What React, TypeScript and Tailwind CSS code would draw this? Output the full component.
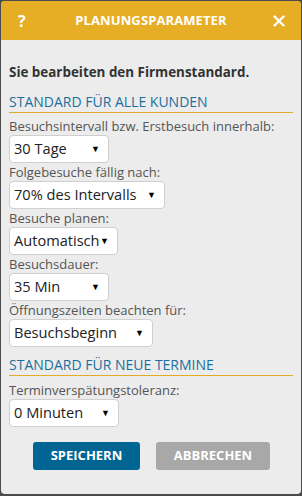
import React from 'react';

const Select: React.FC<{ value: string; width: string }> = ({ value, width }) => (
  <div
    className={`flex items-center justify-between h-[28px] ${width} bg-white border border-[#cfcfcf] rounded-[4px] pl-[4px] pr-[8px] text-[14.6px] text-[#222] whitespace-nowrap`}
  >
    <span>{value}</span>
    <span className="text-[9px] text-black">▼</span>
  </div>
);

const Field: React.FC<{ label: string; value: string; width: string }> = ({ label, value, width }) => (
  <div className="flex flex-col">
    <div className="text-[13px] leading-[18px] text-[#555]">{label}</div>
    <Select value={value} width={width} />
  </div>
);

const SectionTitle: React.FC<{ children: React.ReactNode }> = ({ children }) => (
  <div className="text-[14px] leading-[18px] text-[#1c6f9c] border-b border-[#e3ab27] pb-[1px] mr-[7px]">{children}</div>
);

export default function App() {
  return (
    <div
      className="w-[302px] h-[496px] bg-[#4b4b4b] p-[1px] pb-[2px]"
      style={{ fontFamily: '"Open Sans", "Liberation Sans", sans-serif' }}
    >
      <div className="h-full bg-[#ececec] rounded-[4px] overflow-hidden flex flex-col">
        {/* Header */}
        <div className="h-[39px] bg-[#e6ae24] flex items-center justify-between px-[16px] text-white font-bold">
          <span className="text-[16px] w-[12px] pl-[1px]">?</span>
          <span className="text-[13px] tracking-[0.1px]">PLANUNGSPARAMETER</span>
          <span className="w-[12px] flex justify-end">
            <svg width="12" height="12" viewBox="0 0 12 12">
              <path d="M1.5 1.5 L10.5 10.5 M10.5 1.5 L1.5 10.5" stroke="white" strokeWidth="2.4" strokeLinecap="round" />
            </svg>
          </span>
        </div>

        <div className="flex flex-col pl-[7px] pr-[1px]">
          <div className="mt-[23px] pl-[1px] text-[13.4px] leading-[18px] font-bold text-[#333]">Sie bearbeiten den Firmenstandard.</div>

          <div className="mt-[12px] pl-[1px]">
            <SectionTitle>STANDARD FÜR ALLE KUNDEN</SectionTitle>
          </div>

          <div className="mt-[4px] flex flex-col">
            <div className="pl-[1px]">
              <Field label="Besuchsintervall bzw. Erstbesuch innerhalb:" value="30 Tage" width="w-[100px]" />
            </div>
            <div className="pl-[1px]">
              <Field label="Folgebesuche fällig nach:" value="70% des Intervalls" width="w-[156px]" />
            </div>
            <div className="pl-[1px]">
              <Field label="Besuche planen:" value="Automatisch" width="w-[109px]" />
            </div>
            <div className="pl-[1px]">
              <Field label="Besuchsdauer:" value="35 Min" width="w-[100px]" />
            </div>
            <div className="pl-[1px]">
              <Field label="Öffnungszeiten beachten für:" value="Besuchsbeginn" width="w-[144px]" />
            </div>
          </div>

          <div className="mt-[9px] pl-[1px]">
            <SectionTitle>STANDARD FÜR NEUE TERMINE</SectionTitle>
          </div>

          <div className="mt-[5px] pl-[1px] flex flex-col">
            <Field label="Terminverspätungstoleranz:" value="0 Minuten" width="w-[110px]" />
          </div>

          <div className="mt-[15px] flex gap-[16px] pl-[25px]">
            <button className="w-[107px] h-[28px] rounded-[3px] bg-[#016594] text-white text-[13px] font-bold">SPEICHERN</button>
            <button className="w-[114px] h-[28px] rounded-[3px] bg-[#a8a8a8] text-white text-[13px] font-bold">ABBRECHEN</button>
          </div>
        </div>
      </div>
    </div>
  );
}
